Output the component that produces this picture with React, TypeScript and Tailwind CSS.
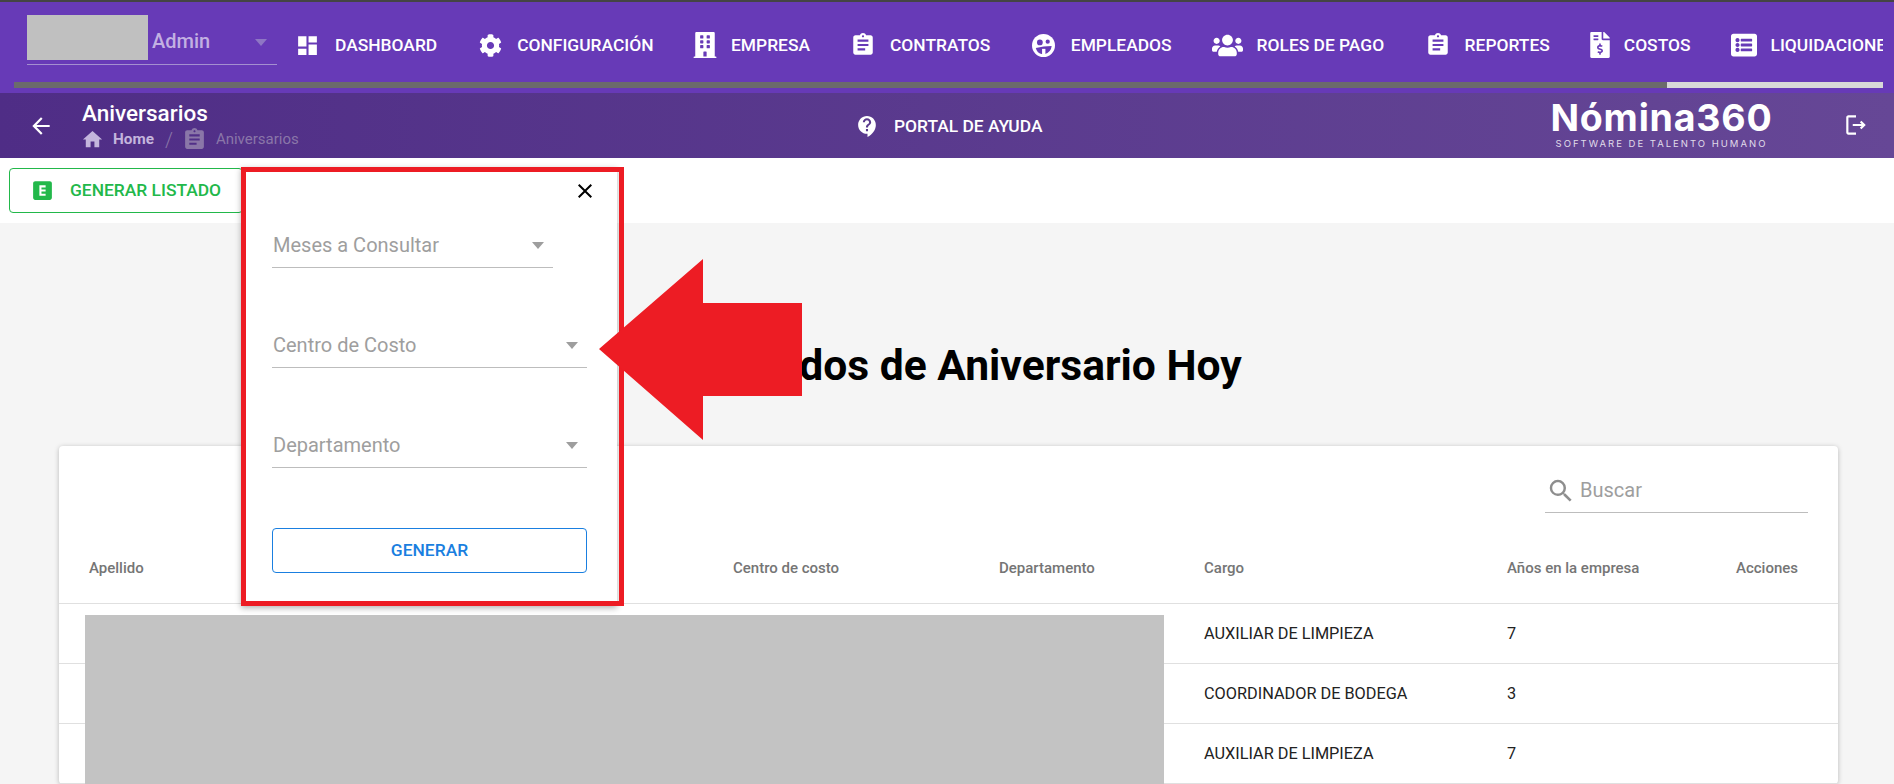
import { FaBuilding, FaCog, FaFileInvoiceDollar, FaListAlt, FaUsers } from "react-icons/fa";
import {
  MdArrowBack,
  MdAssignment,
  MdClose,
  MdContactSupport,
  MdDashboard,
  MdExplicit,
  MdHome,
  MdOutlineLogout,
  MdSearch,
} from "react-icons/md";
import type { IconType } from "react-icons";

function EmpleadosIcon({ size, className }: { size?: number; className?: string }) {
  return (
    <svg width={size} height={size} viewBox="0 0 24 24" className={className}>
      <circle cx="12" cy="12" r="12" fill="#fff" />
      <circle cx="8.2" cy="8.8" r="3" fill="#673ab7" />
      <circle cx="16.4" cy="8" r="2.2" fill="#673ab7" />
      <path d="M4 14.5 Q12 12.5 20.5 12.5 Q20 19 13 21 H11 Q5 20 4 14.5 Z" fill="#673ab7" />
      <path d="M10.5 15.5 H14 V23 H10.5 Z" fill="#fff" />
    </svg>
  );
}

const tabs: { label: string; Icon: IconType | typeof EmpleadosIcon; size: number; className: string; pad: string }[] = [
  { label: "DASHBOARD", Icon: MdDashboard, size: 25, className: "mr-[15px]", pad: "pr-[41.5px]" },
  { label: "CONFIGURACIÓN", Icon: FaCog, size: 23, className: "mr-[15.5px]", pad: "pr-[38.5px]" },
  { label: "EMPRESA", Icon: FaBuilding, size: 26, className: "mr-[13px]", pad: "pr-[40px]" },
  { label: "CONTRATOS", Icon: MdAssignment, size: 26, className: "mr-[14px]", pad: "pr-[41.5px]" },
  { label: "EMPLEADOS", Icon: EmpleadosIcon, size: 23, className: "mr-[16px]", pad: "pr-[40px]" },
  { label: "ROLES DE PAGO", Icon: FaUsers, size: 31, className: "mr-[14px]", pad: "pr-[40.5px]" },
  { label: "REPORTES", Icon: MdAssignment, size: 26, className: "mr-[14px]", pad: "pr-[37px]" },
  { label: "COSTOS", Icon: FaFileInvoiceDollar, size: 26, className: "mr-[11px]", pad: "pr-[40px]" },
  { label: "LIQUIDACIONES", Icon: FaListAlt, size: 26, className: "mr-[14px]", pad: "pr-[40px]" },
];

const columns = ["Apellido", "", "Centro de costo", "Departamento", "Cargo", "Años en la empresa", "Acciones"];

const rows = [
  { cargo: "AUXILIAR DE LIMPIEZA", anios: "7" },
  { cargo: "COORDINADOR DE BODEGA", anios: "3" },
  { cargo: "AUXILIAR DE LIMPIEZA", anios: "7" },
];

function Field({ label, width }: { label: string; width: string }) {
  return (
    <div className={`flex h-[45px] items-center justify-between border-b-[1.5px] border-[#bdbdbd] pl-[1px] pr-[9px] text-[20px] text-[#9e9e9e] ${width}`}>
      <span>{label}</span>
      <span className="h-0 w-0 border-x-[6px] border-t-[7px] border-x-transparent border-t-[#9e9e9e]" />
    </div>
  );
}

export default function App() {
  return (
    <div className="relative h-[784px] overflow-hidden bg-[#f5f5f5] font-['Roboto',sans-serif]">
      <header className="h-[93px] border-t-2 border-[#444] bg-[#673ab7] pl-[14px] pr-[11px]">
        <div className="flex h-[80px] text-white">
          <div className="relative ml-[13px] flex h-[50px] w-[250px] shrink-0 translate-y-[13px] items-center border-b border-[#a48fd0]">
            <div className="h-[45px] w-[121px] shrink-0 -translate-y-[2px] bg-[#c0c0c0]" />
            <span className="ml-[4px] translate-y-[1px] text-[20px] font-medium text-[#c2b0e2]">Admin</span>
            <span className="absolute left-[228px] top-[24px] h-0 w-0 border-x-[6px] border-t-[7px] border-x-transparent border-t-[#8e76c4]" />
          </div>
          <nav className="ml-[18px] flex min-w-0 flex-1 items-center overflow-hidden pt-[7px]">
            {tabs.map(({ label, Icon, size, className, pad }) => (
              <div key={label} className={`flex shrink-0 items-center ${pad}`}>
                <Icon size={size} className={`shrink-0 ${className}`} />
                <span className="text-[17.4px] font-medium whitespace-nowrap">{label}</span>
              </div>
            ))}
          </nav>
        </div>
        <div className="flex h-[6px] justify-end bg-[#6b6b6b]">
          <div className="w-[216px] bg-[#d8d8d8]" />
        </div>
      </header>

      <div className="flex h-[65px] items-center bg-gradient-to-r from-[#4f2d86] to-[#664796] text-white">
        <MdArrowBack size={26} className="ml-[28px] shrink-0" />
        <div className="ml-[28px] w-[400px] -translate-y-[2px]">
          <div className="text-[22.5px] leading-[26px] font-medium">Aniversarios</div>
          <div className="flex h-[22px] translate-y-[3px] items-center text-[15.3px] text-[#c4b5dd]">
            <MdHome size={23} className="-ml-[1px]" />
            <span className="ml-[9px] font-bold">Home</span>
            <span className="ml-[11px] text-[20px] font-light text-[#8a76a8]">/</span>
            <MdAssignment size={25} className="ml-[9px] text-[#8a76a8]" />
            <span className="ml-[9px] text-[15px] text-[#8a76a8]">Aniversarios</span>
          </div>
        </div>
        <div className="ml-[373px] flex w-[500px] translate-y-[1px] items-center">
          <MdContactSupport size={25} />
          <span className="ml-[14px] text-[17.4px] font-medium">PORTAL DE AYUDA</span>
        </div>
        <div className="ml-[196px] flex w-[221px] flex-col items-center font-['Inter',sans-serif]">
          <span className="-translate-y-[2px] text-[37.5px] leading-[36px] font-bold tracking-[0.8px] whitespace-nowrap">Nómina360</span>
          <span className="text-[9.5px] leading-[12px] tracking-[2px] whitespace-nowrap text-[#e0dcea]">SOFTWARE DE TALENTO HUMANO</span>
        </div>
        <MdOutlineLogout size={26} className="ml-[71px] -translate-y-[1px]" />
      </div>

      <div className="flex h-[65px] items-center bg-white pl-[9px]">
        <button className="flex h-[45px] w-[234px] items-center rounded-[4px] border border-[#22b84a] pl-[20px] text-[17.4px] font-medium text-[#22b84a]">
          <MdExplicit size={25} />
          <span className="ml-[15px]">GENERAR LISTADO</span>
        </button>
      </div>

      <main className="pl-[59px] pr-[56px] pt-[112px]">
        <h1 className="pl-[2px] text-center text-[42.6px] leading-[60px] font-bold whitespace-nowrap text-black">Empleados de Aniversario Hoy</h1>
        <section className="mt-[51px] rounded-[4px] bg-white shadow-[0_1px_5px_rgba(0,0,0,0.25)]">
          <div className="flex h-[67px] items-end justify-end pr-[30px]">
            <div className="flex h-[44px] w-[263px] items-center border-b-[1.5px] border-[#bdbdbd] pl-[1px] text-[20px] text-[#9e9e9e]">
              <MdSearch size={30} className="text-[#8e8e8e]" />
              <span className="ml-[4px] -translate-y-[1px]">Buscar</span>
            </div>
          </div>
          <div className="grid h-[91px] grid-cols-[320px_324px_266px_205px_303px_229px_1fr] items-center border-b border-[#e0e0e0] pl-[30px] pt-[20px] text-[15px] font-medium text-[#757575]">
            {columns.map((c, i) => (
              <span key={i}>{c}</span>
            ))}
          </div>
          {rows.map((r, i) => (
            <div key={i} className="grid h-[60px] grid-cols-[1115px_303px_1fr] items-center border-b border-[#e0e0e0] pl-[30px] pt-[1px] text-[16.3px] text-[#222]">
              <span />
              <span>{r.cargo}</span>
              <span>{r.anios}</span>
            </div>
          ))}
        </section>
      </main>

      {/* tapa de datos personales */}
      <div className="absolute left-[85px] top-[615px] h-[169px] w-[1079px] bg-[#c3c3c3]" />

      {/* popover de filtros con el recuadro rojo encima */}
      <div className="absolute left-[241px] top-[167px] h-[439px] w-[383px]">
        <div className="absolute inset-y-0 left-0 right-[7px] bg-white shadow-[0_2px_6px_rgba(0,0,0,0.3)]">
          <MdClose size={24} className="absolute left-[332px] top-[12px] text-black" />
          <div className="absolute left-[31px] top-[56px]"><Field label="Meses a Consultar" width="w-[281px]" /></div>
          <div className="absolute left-[31px] top-[156px]"><Field label="Centro de Costo" width="w-[315px]" /></div>
          <div className="absolute left-[31px] top-[256px]"><Field label="Departamento" width="w-[315px]" /></div>
          <button className="absolute left-[31px] top-[361px] h-[45px] w-[315px] rounded-[4px] border border-[#1a7fe0] text-[17.4px] font-medium text-[#1a7fe0]">GENERAR</button>
        </div>
        <div className="absolute inset-0 border-[5px] border-[#ed1c24]" />
      </div>

      <svg className="absolute left-[599px] top-[259px]" width="203" height="181" viewBox="0 0 203 181">
        <path d="M0 90 L104 0 V44 H203 V137 H104 V181 Z" fill="#ed1c24" />
      </svg>
    </div>
  );
}
